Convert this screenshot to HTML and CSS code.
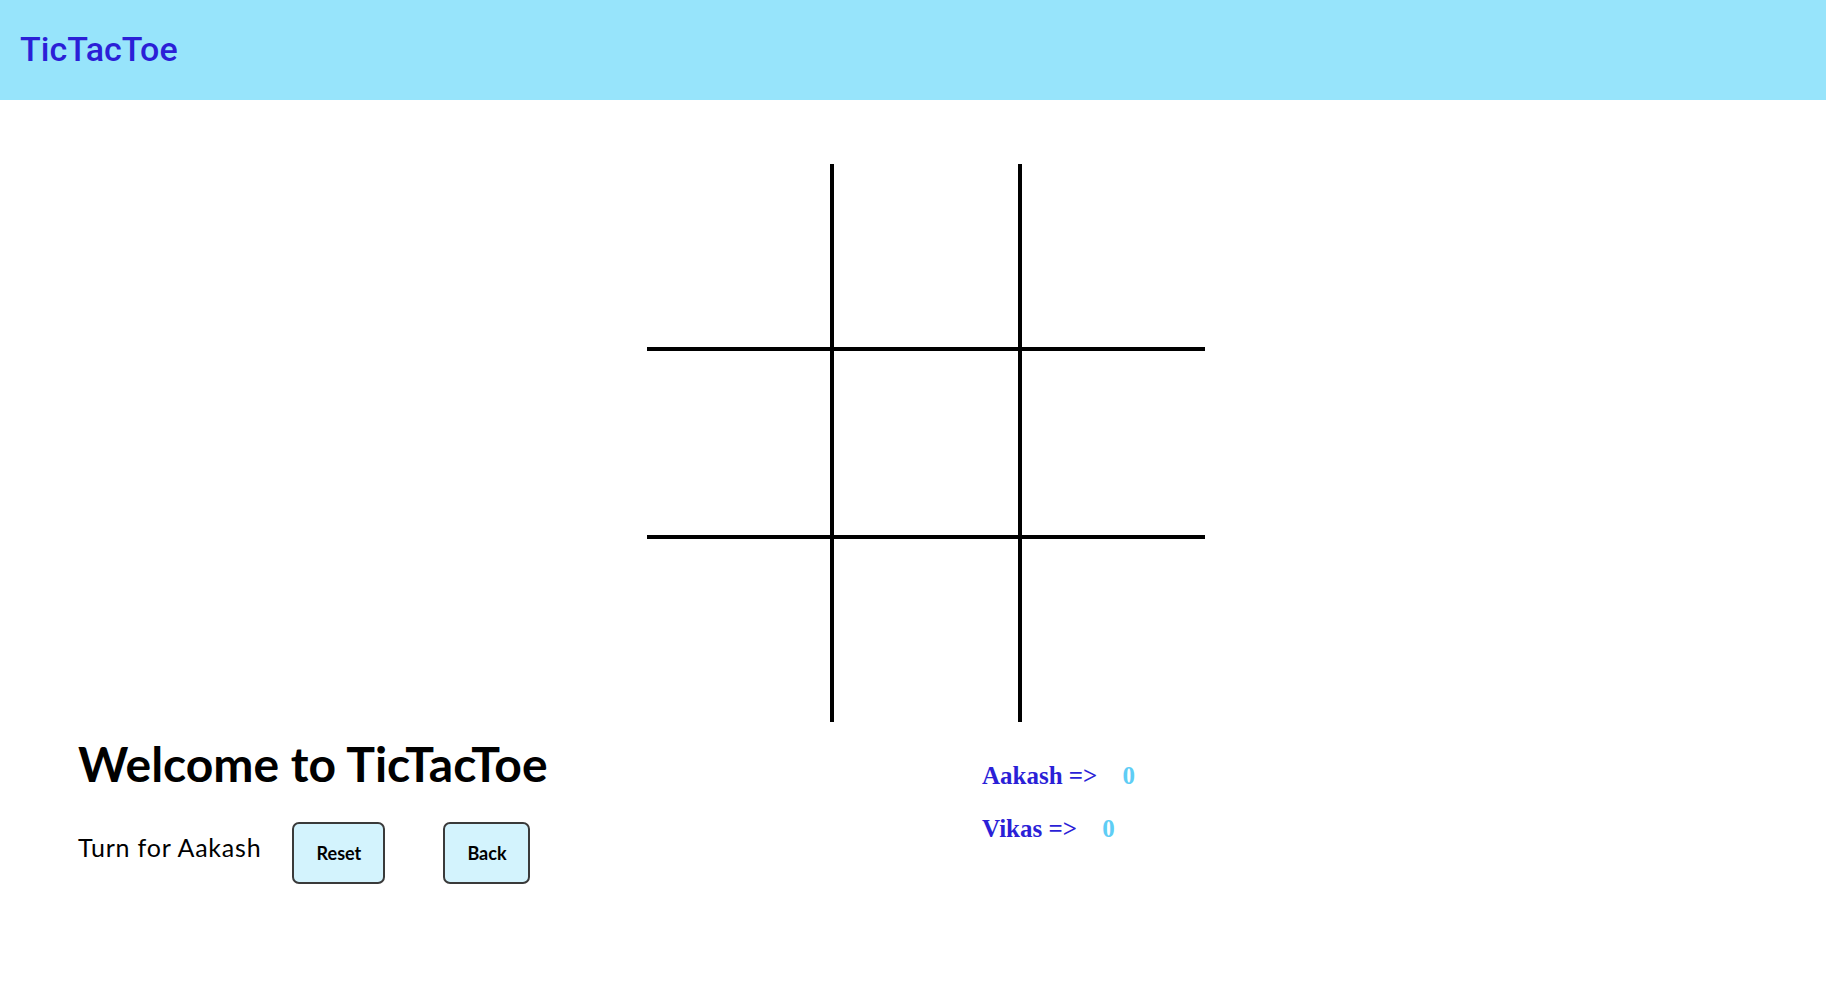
FILE: index.html
```html
<!DOCTYPE html>
<html>
<head>
<meta charset="utf-8">
<title>TicTacToe</title>
<link rel="stylesheet" href="styles.css">
</head>
<body>
<header class="topbar">
  <div class="brand">TicTacToe</div>
</header>
<main class="game">
  <div class="board">
    <div class="cell"></div><div class="cell"></div><div class="cell"></div>
    <div class="cell"></div><div class="cell"></div><div class="cell"></div>
    <div class="cell"></div><div class="cell"></div><div class="cell"></div>
  </div>
  <section class="bottom">
    <div class="info">
      <h1 class="welcome">Welcome to TicTacToe</h1>
      <div class="controls">
        <span class="turn">Turn for Aakash</span>
        <button class="btn btn-reset">Reset</button>
        <button class="btn btn-back">Back</button>
      </div>
    </div>
    <div class="scores">
      <div class="score-row">Aakash =&gt; <span class="score-val">0</span></div>
      <div class="score-row">Vikas =&gt; <span class="score-val">0</span></div>
    </div>
  </section>
</main>
</body>
</html>
```
FILE: styles.css
```css
html, body {
  margin: 0;
  padding: 0;
  background: #ffffff;
}
body {
  font-family: "Lato", "Open Sans", sans-serif;
}
.topbar {
  height: 100px;
  background: #97e4fb;
  display: flex;
  align-items: flex-start;
  box-sizing: border-box;
  padding: 27px 0 0 20px;
}
.brand {
  font-family: "Roboto", sans-serif;
  font-weight: 500;
  font-size: 34px;
  line-height: 44px;
  color: #2b1fd7;
}
.game {
  display: flex;
  flex-direction: column;
}
.board {
  margin: 64px 0 0 647px;
  width: 558px;
  height: 558px;
  display: grid;
  grid-template-columns: repeat(3, 1fr);
  grid-template-rows: repeat(3, 1fr);
  gap: 4px;
  background: #000000;
}
.cell {
  background: #ffffff;
}
.bottom {
  display: flex;
  align-items: flex-start;
  padding-left: 78px;
}
.info {
  width: 904px;
}
.welcome {
  margin: 14px 0 0 0;
  font-family: "Lato", sans-serif;
  font-weight: 700;
  font-size: 48px;
  line-height: 56px;
  color: #000000;
}
.controls {
  display: flex;
  align-items: center;
  margin-top: 30px;
}
.turn {
  font-size: 25px;
  letter-spacing: 0.8px;
  font-weight: 400;
  color: #000000;
  margin-right: 31px;
  position: relative;
  top: -6px;
}
.btn {
  font-family: "Lato", sans-serif;
  font-weight: 700;
  font-size: 18px;
  color: #000000;
  height: 62px;
  background: #d3f3fd;
  border: 2px solid #3a3a3a;
  border-radius: 7px;
  padding: 0;
}
.btn-reset {
  width: 93px;
}
.btn-back {
  width: 87px;
  margin-left: 58px;
}
.scores {
  margin-top: 27px;
  font-family: "Liberation Serif", "Times New Roman", serif;
  font-weight: 700;
  font-size: 25px;
  color: #2b1fd7;
}
.score-row {
  line-height: 53px;
}
.score-val {
  color: #5ecdf5;
  margin-left: 19px;
}
```
